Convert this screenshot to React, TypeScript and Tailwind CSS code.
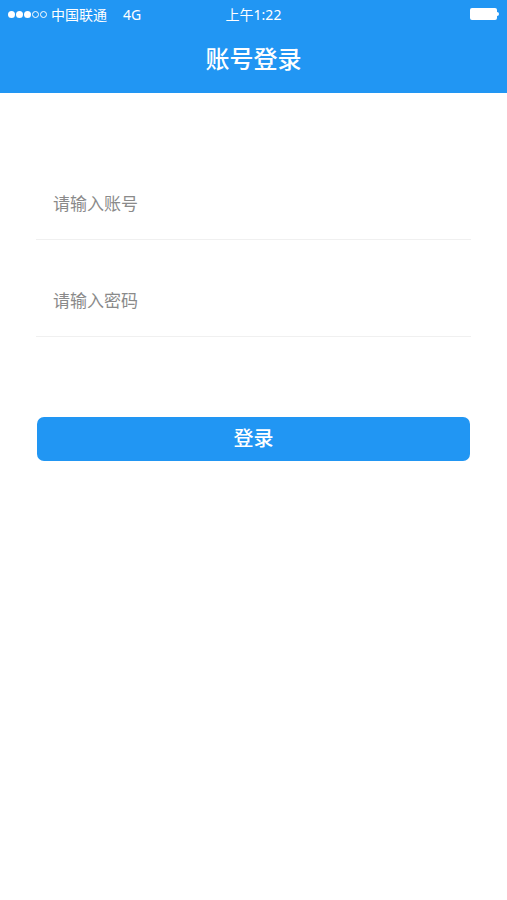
const font = "font-['Noto_Sans','Noto_Sans_CJK_SC',sans-serif]";

function StatusBar() {
  return (
    <div className="flex h-[28px] items-center px-[8px] text-[14px] text-white">
      <div className="flex flex-1 items-center gap-[4px]">
        <div className="flex items-center gap-[1px]">
          {[1, 2, 3].map((i) => (
            <span key={i} className="h-[7px] w-[7px] rounded-full bg-white" />
          ))}
          {[4, 5].map((i) => (
            <span key={i} className="h-[7px] w-[7px] rounded-full border border-white" />
          ))}
        </div>
        <span>中国联通</span>
        <span className="ml-[12px]">4G</span>
      </div>
      <span className="absolute left-1/2 -translate-x-1/2">上午1:22</span>
      <div className="flex items-center">
        <span className="h-[12px] w-[27px] rounded-[2px] bg-white" />
        <span className="h-[4px] w-[2px] rounded-r bg-white" />
      </div>
    </div>
  );
}

function Field({ placeholder }: { placeholder: string }) {
  return (
    <div className="mx-[36px] flex h-[97px] items-end border-b border-[#f0f0f0] pb-[23px]">
      <input
        placeholder={placeholder}
        className="w-full bg-transparent pl-[17px] text-[17px] outline-none placeholder:text-[#8a8a8a]"
      />
    </div>
  );
}

export default function App() {
  return (
    <div className={`relative min-h-[900px] w-full bg-white ${font}`}>
      <div className="relative h-[93px] bg-[#2196f3]">
        <StatusBar />
        <div className="flex h-[65px] items-center justify-center pb-[4px] text-[24px] font-medium text-white">
          账号登录
        </div>
      </div>
      <div className="pt-[50px]">
        <Field placeholder="请输入账号" />
        <Field placeholder="请输入密码" />
      </div>
      <div className="mx-[37px] mt-[80px]">
        <button className="flex h-[44px] w-full items-center justify-center rounded-[7px] bg-[#2196f3] text-[20px] font-medium text-white">
          登录
        </button>
      </div>
    </div>
  );
}
